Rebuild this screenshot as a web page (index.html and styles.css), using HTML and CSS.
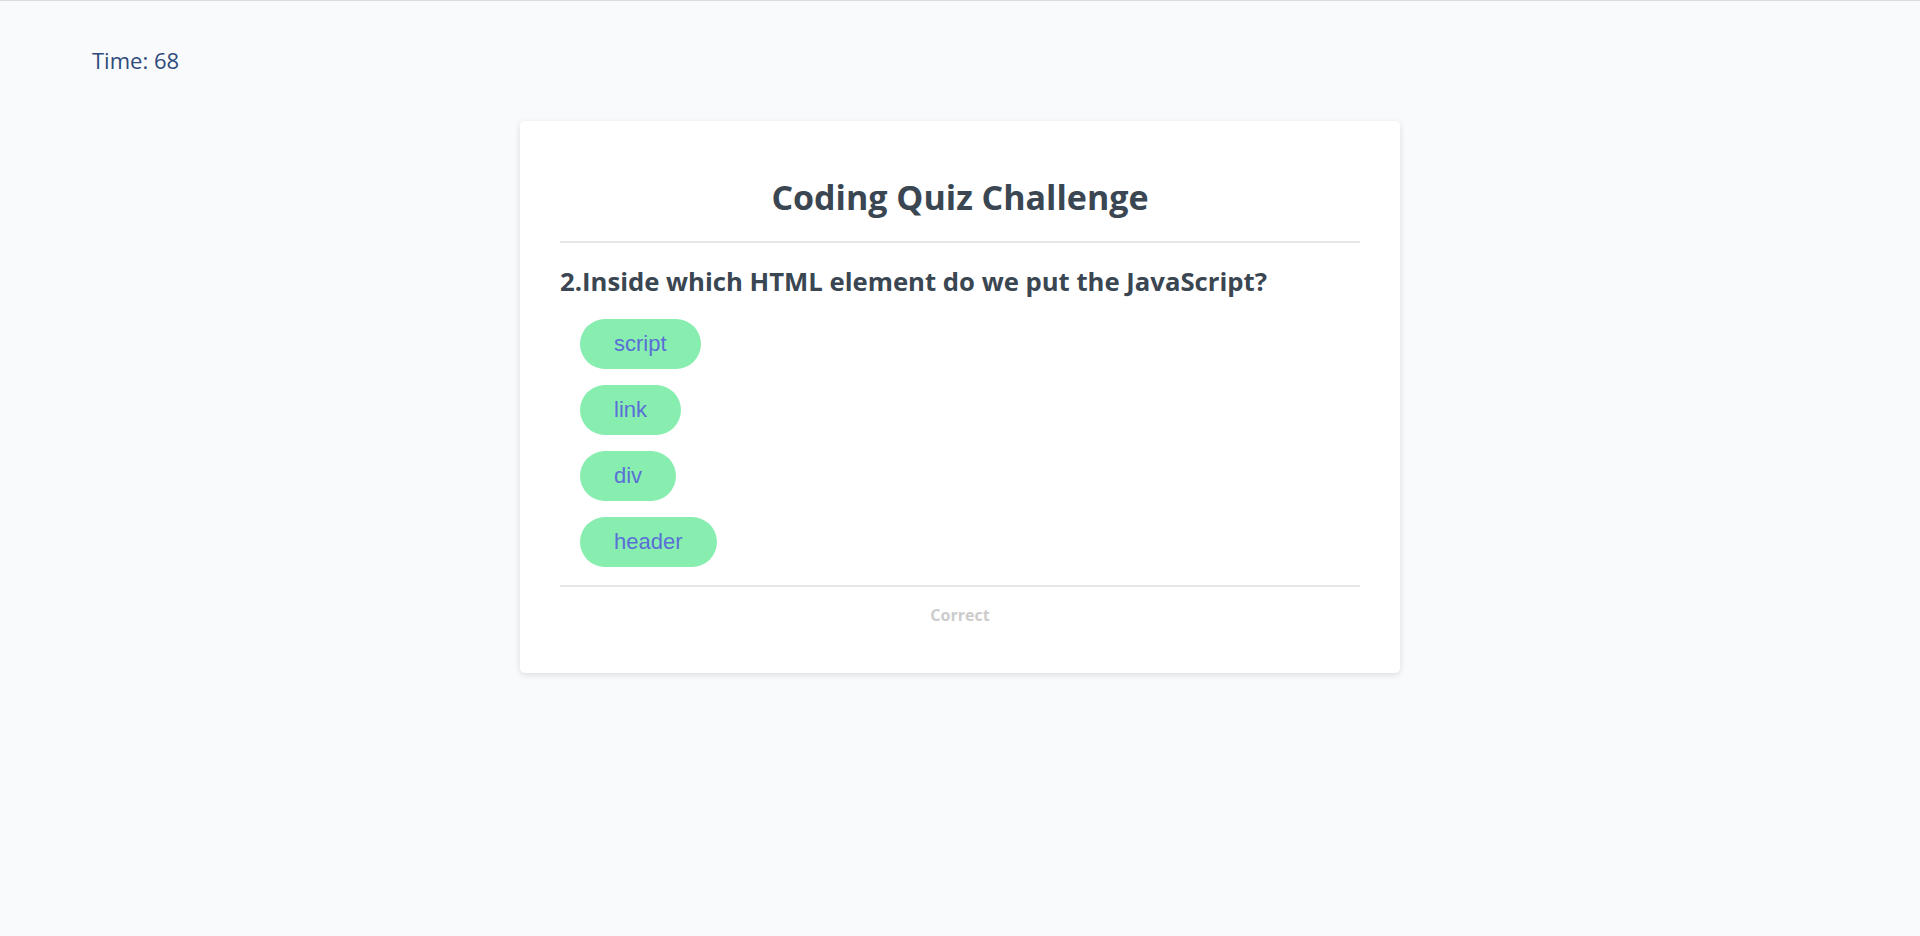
FILE: index.html
```html
<!DOCTYPE html>
<html>
<head>
<meta charset="utf-8">
<title>Coding Quiz</title>
<link rel="stylesheet" href="styles.css">
</head>
<body>
<header class="topbar">
  <div class="timer">Time: 68</div>
</header>
<main class="card">
  <h1 class="title">Coding Quiz Challenge</h1>
  <hr class="rule">
  <h2 class="question">2.Inside which HTML element do we put the JavaScript?</h2>
  <div class="answers">
    <button class="answer">script</button>
    <button class="answer">link</button>
    <button class="answer">div</button>
    <button class="answer">header</button>
  </div>
  <hr class="rule">
  <p class="feedback">Correct</p>
</main>
</body>
</html>
```
FILE: styles.css
```css
html, body {
  margin: 0;
  padding: 0;
}
body {
  background: #f9fafc;
  border-top: 1px solid #dcdcdc;
  font-family: "Open Sans", "Noto Sans", sans-serif;
  color: #37474f;
  min-height: 935px;
}
.topbar {
  padding: 41px 92px 0;
  height: 36px;
}
.timer {
  font-size: 22px;
  color: #2f4a7b;
  line-height: 36px;
}
.card {
  width: 800px;
  margin: 43px auto 0;
  background: #fff;
  border-radius: 5px;
  box-shadow: 0 2px 6px rgba(0, 0, 0, 0.12);
  padding: 32px 40px 43px;
}
.title {
  margin: 0;
  text-align: center;
  font-size: 34px;
  font-weight: 700;
  line-height: 88px;
  color: #3a4651;
}
.rule {
  border: 0;
  border-top: 2px solid #e6e6e6;
  margin: 0;
}
.question {
  margin: 24px 0 22px;
  font-size: 25.7px;
  font-weight: 700;
  line-height: 30px;
  color: #3a4651;
}
.answers {
  display: flex;
  flex-direction: column;
  align-items: flex-start;
  gap: 16px;
  padding: 0 0 18px 20px;
}
.answer {
  font-family: "Liberation Sans", Arial, sans-serif;
  font-size: 22px;
  line-height: 26px;
  padding: 12px 34px;
  border: 0;
  border-radius: 25px;
  background: #88eeb0;
  color: #5a6fd6;
}
.feedback {
  margin: 13px 0 0;
  text-align: center;
  font-size: 16px;
  font-weight: 700;
  color: #cccccc;
  line-height: 30px;
}
```
